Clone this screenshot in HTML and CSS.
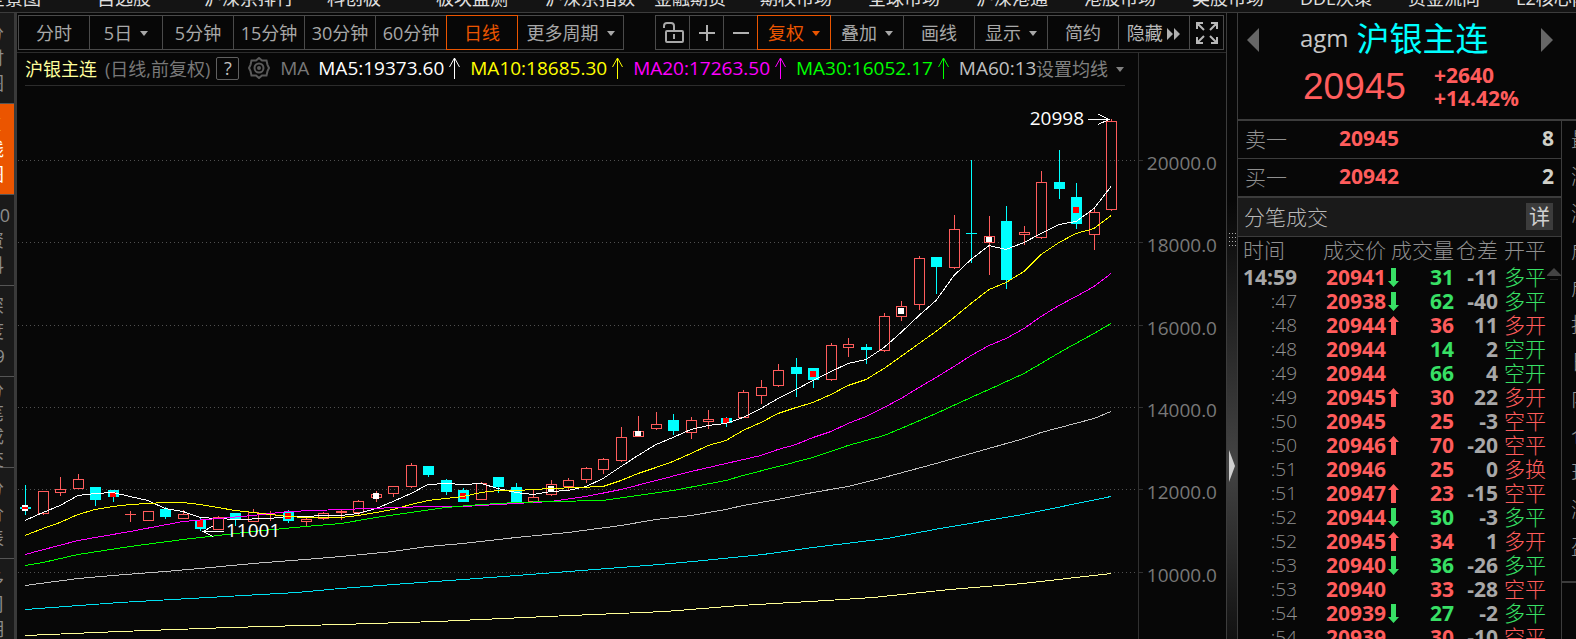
FILE: index.html
```html
<!DOCTYPE html>
<html lang="zh-CN">
<head>
    <meta charset="UTF-8">
    <meta name="viewport" content="width=device-width, initial-scale=1.0">
    <title>沪银主连 agm</title>
    <link rel="stylesheet" href="styles.css">
</head>
<body>
    <nav class="menu">
        <a href="#">全景图</a>
        <a href="#">自选股</a>
        <a href="#">沪深京排行</a>
        <a href="#">科创板</a>
        <a href="#">板块监测</a>
        <a href="#">沪深京指数</a>
        <a href="#">金融期货</a>
        <a href="#">期权市场</a>
        <a href="#">全球市场</a>
        <a href="#">沪深港通</a>
        <a href="#">港股市场</a>
        <a href="#">美股市场</a>
        <a href="#">DDE决策</a>
        <a href="#">资金流向</a>
        <a href="#">L2核心内参</a>
    </nav>

    <div class="app">
        <nav class="side">
            <a href="#">分<br>时<br>图</a>
            <a href="#" class="active">K<br>线<br>图</a>
            <a href="#">F10<br>资<br>料</a>
            <a href="#">深<br>度<br>F9</a>
            <a href="#" class="four">分<br>笔<br>成<br>交</a>
            <a href="#">分<br>价<br>表</a>
            <a href="#">多<br>周<br>期</a>
        </nav>

        <main class="main">
            <div class="toolbar">
                <div class="group periods">
                    <button>分时</button>
                    <button class="wide">5日<i class="caret"></i></button>
                    <button>5分钟</button>
                    <button>15分钟</button>
                    <button>30分钟</button>
                    <button>60分钟</button>
                    <button class="on">日线</button>
                    <button class="more">更多周期<i class="caret"></i></button>
                </div>
                <div class="group tools">
                    <button class="icon" aria-label="锁定">
                        <svg width="24" height="24" viewBox="0 0 24 24" fill="none" stroke="#a8a8a8" stroke-width="2">
                            <rect x="5" y="10" width="17" height="11" rx="1"/>
                            <path d="M3 7V5q0-3 3-3h4q3 0 3 3v5M13 13v5"/>
                        </svg>
                    </button>
                    <button class="icon" aria-label="放大">
                        <svg width="18" height="18" viewBox="0 0 18 18" stroke="#b0b0b0" stroke-width="2"><path d="M1 9h16M9 1v16"/></svg>
                    </button>
                    <button class="icon" aria-label="缩小">
                        <svg width="18" height="18" viewBox="0 0 18 18" stroke="#b0b0b0" stroke-width="2"><path d="M1 9h16"/></svg>
                    </button>
                    <button class="wide on">复权<i class="caret"></i></button>
                    <button class="wide">叠加<i class="caret"></i></button>
                    <button>画线</button>
                    <button class="wide">显示<i class="caret"></i></button>
                    <button>简约</button>
                    <button class="hide">隐藏
                        <svg width="14" height="12" viewBox="0 0 14 12" fill="#b0b0b0"><path d="M0 0l6 6-6 6zM7 0l6 6-6 6z"/></svg>
                    </button>
                    <button class="icon" aria-label="全屏">
                        <svg width="22" height="22" viewBox="0 0 22 22" fill="none" stroke="#b8b8b8" stroke-width="2">
                            <path d="M1 7V1h6M2 2l6 6M15 1h6v6M20 2l-6 6M1 15v6h6M2 20l6-6M21 15v6h-6M20 20l-6-6"/>
                        </svg>
                    </button>
                </div>
            </div>

            <div class="ma-row">
                <span class="name">沪银主连</span>
                <span class="mode">(日线,前复权)</span>
                <button class="help">?</button>
                <svg class="gear" width="22" height="22" viewBox="0 0 22 22" fill="none" stroke="#5a5a5a" stroke-width="2">
                    <path d="M11 1l3 2.600 4.500 0 1 4.200 1.500 3.200-1.500 3.200-1 4.200-4.500 0-3 2.600-3-2.600-4.500 0-1-4.200L1 11l1.500-3.200 1-4.200 4.500 0z"/>
                    <circle cx="11" cy="11" r="4.500"/>
                    <circle cx="11" cy="11" r="1"/>
                </svg>
                <span class="label">MA</span>
                <div class="values">
                    <span class="ma5">MA5:19373.60<svg class="up" viewBox="0 0 11 22"><path d="M5.500 22V1M.5 10l5-9 5 9"/></svg></span>
                    <span class="ma10">MA10:18685.30<svg class="up" viewBox="0 0 11 22"><path d="M5.500 22V1M.5 10l5-9 5 9"/></svg></span>
                    <span class="ma20">MA20:17263.50<svg class="up" viewBox="0 0 11 22"><path d="M5.500 22V1M.5 10l5-9 5 9"/></svg></span>
                    <span class="ma30">MA30:16052.17<svg class="up" viewBox="0 0 11 22"><path d="M5.500 22V1M.5 10l5-9 5 9"/></svg></span>
                    <span class="ma60">MA60:13905.42</span>
                </div>
                <button class="set">设置均线<i class="caret"></i></button>
            </div>

            <svg id="chart" class="chart" viewBox="17 52 1209 587"></svg>
        </main>

        <div class="splitter">
            <svg class="grip" width="8" height="13" viewBox="0 0 8 13" stroke="#b0b0b0" stroke-dasharray="1 2"><path d="M1 .5h7M1 4.500h7M1 8.500h7M1 12.500h7"/></svg>
            <svg class="handle" width="7" height="32" viewBox="0 0 7 32" fill="#d0d0d0"><path d="M0 0l6 16-6 16z"/></svg>
        </div>

        <aside class="quote">
            <header class="head">
                <div class="title">
                    <button class="step" aria-label="上一个"><svg width="12" height="24" viewBox="0 0 12 24" fill="#666"><path d="M12 0v24L0 12z"/></svg></button>
                    <h1><span>agm</span>沪银主连</h1>
                    <button class="step" aria-label="下一个"><svg width="12" height="24" viewBox="0 0 12 24" fill="#666"><path d="M0 0v24l12-12z"/></svg></button>
                </div>
                <div class="last">
                    <strong class="price">20945</strong>
                    <div class="change">+2640<br>+14.42%</div>
                </div>
            </header>
            <div class="cols">
                <section class="left">
                    <dl class="book">
                        <div><dt>卖一</dt><dd class="red">20945</dd><dd class="qty">8</dd></div>
                        <div><dt>买一</dt><dd class="red">20942</dd><dd class="qty">2</dd></div>
                    </dl>
                    <div class="bar"><h2>分笔成交</h2><button>详</button></div>
                    <table class="ticks">
                        <colgroup><col class="c-time"><col class="c-price"><col class="c-vol"><col class="c-diff"><col class="c-type"></colgroup>
                        <thead>
                            <tr><th>时间</th><th>成交价</th><th>成交量</th><th>仓差</th><th>开平</th></tr>
                        </thead>
                        <tbody id="ticks"></tbody>
                    </table>
                    <svg class="scroll-up" width="14" height="12" viewBox="0 0 14 12"><path d="M7 0l7 7v1H0V7z" fill="#444"/><path d="M3 11.500h8" stroke="#222"/></svg>
                </section>
                <ul class="more-info">
                    <li>最新</li><li>涨跌</li><li>涨幅</li><li>成量</li><li>成额</li><li>持仓</li>
                    <li>日增</li><li>内盘</li><li>仓差</li><li>现量</li><li>涨停</li><li>盈亏</li>
                </ul>
            </div>
        </aside>
    </div>

    <script src="script.js"></script>
</body>
</html>
```
FILE: styles.css
```css
* {
    box-sizing: border-box;
}
body {
    margin: 0;
    height: 100vh;
    overflow: hidden;
    display: flex;
    flex-direction: column;
    background: #070707;
    color: #a8a8a8;
    font-family: "Open Sans", "Noto Sans CJK SC", sans-serif;
    font-size: 18px;
}
a {
    color: inherit;
    text-decoration: none;
}
button {
    padding: 0;
    border: none;
    background: none;
    color: inherit;
    font: inherit;
}
h1, h2, dl, dd, ul {
    margin: 0;
    padding: 0;
    font-weight: 400;
}
.caret {
    display: inline-block;
    border: 4px solid transparent;
    border-top: 5px solid currentColor;
    border-bottom: none;
    margin-left: 8px;
    vertical-align: 4px;
}

/* top menu */
.menu {
    display: grid;
    grid-template-columns: 110px 107px 123px 109px 109px 109px 106px repeat(7, 108px) 1fr;
    height: 13px;
    flex: none;
    overflow: hidden;
    background: #141414;
    border-bottom: 1px solid #3c3c3c;
    color: #e0e0e0;
    margin-left: -13px;
}
.menu a {
    margin-top: -14px;
    line-height: 24px;
    white-space: nowrap;
}

.app {
    flex: 1;
    min-height: 0;
    display: flex;
}

/* left tabs */
.side {
    width: 17px;
    flex: none;
    overflow: hidden;
    background: #1a1a1a;
    border-right: 3px solid #3a3a3a;
    color: #8c8c8c;
}
.side a {
    display: block;
    width: 38px;
    height: 91px;
    margin-left: -24px;
    padding-top: 8px;
    line-height: 25px;
    text-align: center;
    border-bottom: 1px solid #555;
}
.side .active {
    background: #eb5500;
    color: #fff;
}
.side .four {
    padding-top: 2px;
    line-height: 23px;
}

.main {
    flex: 1;
    min-width: 0;
    position: relative;
}

/* toolbar */
.toolbar {
    display: flex;
    justify-content: space-between;
    height: 40px;
    padding: 2px 2px 0 1px;
    border-bottom: 1px solid #2c2c2c;
}
.group {
    display: flex;
    height: 35px;
}
.group button {
    width: 72px;
    flex: none;
    border: 1px solid #4a4a4a;
    margin-right: -1px;
    padding-bottom: 2px;
    white-space: nowrap;
}
.group .wide {
    width: 74px;
}
.periods .more {
    width: 107px;
}
.tools {
    margin-right: 1px;
}
.tools .icon {
    width: 35px;
    padding: 0;
    display: flex;
    align-items: center;
    justify-content: center;
}
.group .on {
    position: relative;
    border-color: #eb5500;
    color: #eb5500;
}
.group .hide {
    color: #b8b8b8;
}

/* moving averages */
.ma-row {
    display: flex;
    align-items: center;
    height: 33px;
    margin: 0 101px 0 8px;
    padding-bottom: 2px;
    border-bottom: 1px solid #2c2c2c;
    white-space: nowrap;
}
.name {
    color: #ffff9c;
}
.mode {
    margin-left: 8px;
    color: #787878;
}
.help {
    width: 23px;
    height: 23px;
    margin-left: 6px;
    border: 1px solid #606060;
    border-radius: 2px;
    line-height: 20px;
    color: #c0c0c0;
}
.gear {
    margin-left: 9px;
}
.label {
    width: 38px;
    margin-left: 10px;
    font-size: 19px;
    color: #787878;
}
.values {
    flex: 1;
    min-width: 0;
    overflow: hidden;
    display: flex;
    gap: 10px;
    font-size: 19px;
}
.values span {
    display: flex;
    align-items: center;
}
.up {
    width: 11px;
    height: 22px;
    margin-left: 5px;
    fill: none;
    stroke: currentColor;
}
.ma5 { color: #fff; }
.ma10 { color: #ff0; }
.ma20 { color: #f0f; }
.ma30 { color: #0f0; }
.ma60 { color: #c0c0c0; }
.set {
    color: #808080;
    margin-right: 1px;
}

.chart {
    position: absolute;
    top: 39px;
    left: 0;
    width: 100%;
    pointer-events: none;
    shape-rendering: crispEdges;
    font-size: 19px;
}

/* splitter */
.splitter {
    position: relative;
    width: 12px;
    flex: none;
    border-left: 1px solid #3c3c3c;
    border-right: 1px solid #3c3c3c;
    background: linear-gradient(#070707 30%, #444 72%, #111);
}
.grip {
    position: absolute;
    top: 220px;
    left: 1px;
}
.handle {
    position: absolute;
    top: 437px;
    left: 2px;
}

/* quote panel */
.quote {
    width: 338px;
    flex: none;
    display: flex;
    flex-direction: column;
    overflow: hidden;
}
.head {
    height: 108px;
    flex: none;
    border-bottom: 2px solid #3c3c3c;
}
.title {
    display: flex;
    align-items: center;
    height: 54px;
    padding: 0 23px 0 9px;
}
.step {
    height: 24px;
    line-height: 0;
}
.title h1 {
    flex: 1;
    display: flex;
    align-items: center;
    gap: 8px;
    padding: 0 0 6px 41px;
    font-size: 33px;
    color: #0ff;
}
.title span {
    font-size: 24px;
    color: #c8c8c8;
}
.last {
    display: flex;
    align-items: center;
    height: 40px;
    padding-left: 65px;
    gap: 28px;
    color: #ff5c5c;
}
.price {
    font: 37px "Liberation Sans", sans-serif;
}
.change {
    font-size: 21px;
    font-weight: 700;
    line-height: 23px;
}
.cols {
    flex: 1;
    min-height: 0;
    display: flex;
}
.left {
    position: relative;
    width: 324px;
    flex: none;
    border-right: 1px solid #3c3c3c;
    font-size: 21px;
}
.book div {
    display: grid;
    grid-template-columns: 94px 1fr auto;
    align-items: center;
    height: 38px;
    padding: 0 7px 3px;
    border-bottom: 1px solid #3c3c3c;
}
.book dt {
    font-weight: 300;
    color: #909090;
}
.book dd {
    font-weight: 700;
}
.book .qty {
    color: #d0d0c8;
}
.bar {
    display: flex;
    align-items: center;
    justify-content: space-between;
    height: 40px;
    padding: 0 8px 2px 6px;
    background: #1a1a1a;
    border-top: 1px solid #3c3c3c;
    border-bottom: 1px solid #3c3c3c;
}
.bar h2 {
    font-size: 21px;
    font-weight: 300;
    color: #b8b8b8;
}
.bar button {
    width: 27px;
    height: 27px;
    line-height: 25px;
    background: #3c3c3c;
    color: #d0d0d0;
}
.ticks {
    width: 308px;
    table-layout: fixed;
    border-collapse: collapse;
}
.c-time { width: 59px; }
.c-price { width: 89px; }
.c-vol { width: 68px; }
.c-diff { width: 44px; }
.c-type { width: 48px; }
.ticks th, .ticks td {
    padding: 0;
    height: 24px;
    line-height: 22px;
    padding-bottom: 2px;
    text-align: right;
    white-space: nowrap;
}
.ticks th {
    height: 29px;
    line-height: 27px;
    font-weight: 300;
    color: #909090;
}
.ticks th:first-child {
    text-align: left;
    padding-left: 5px;
}
.ticks td:first-child {
    font-size: 19px;
    font-weight: 300;
    color: #909090;
}
.ticks tr:first-child td:first-child {
    font-size: 21px;
    font-weight: 700;
    color: #a8a8a8;
}
.ticks td:nth-child(n+2):nth-child(-n+4) {
    font-weight: 700;
}
.ticks td.type {
    font-weight: 300;
}
.ticks .arrow {
    width: 11px;
    height: 19px;
    margin-left: 2px;
    vertical-align: -2px;
    fill: currentColor;
}
.ticks td:nth-child(2) {
    padding-left: 29px;
    text-align: left;
}
.red { color: #ff5c5c; }
.green { color: #38e065; }
.scroll-up {
    position: absolute;
    top: 147px;
    right: 0;
}
.more-info {
    flex: 1;
    height: 462px;
    overflow: hidden;
    list-style: none;
    padding-left: 9px;
    font-size: 21px;
    font-weight: 300;
    color: #909090;
    border-bottom: 2px solid #3c3c3c;
}
.more-info li {
    height: 37px;
    line-height: 36px;
    white-space: nowrap;
}
```
FILE: script.js
```js
// x, body top, body bottom, high, low, up/down, marker [colour, top, bottom]
const candles = [
    [25, 507, 509, 485, 515, 'd', ['cross', 505, 511]],
    [43, 491, 514, 491, 515, 'u'],
    [60, 489, 493, 477, 496, 'u'],
    [78, 479, 489, 474, 489, 'u'],
    [95, 487, 500, 487, 506, 'd'],
    [113, 490, 497, 490, 502, 'd', ['red', 492, 497]],
    [130, 514, 515, 511, 522, 'u'],
    [148, 511, 521, 511, 521, 'u'],
    [165, 509, 517, 507, 519, 'd'],
    [183, 514, 519, 510, 519, 'u'],
    [200, 520, 529, 517, 531, 'd', ['red', 520, 527]],
    [218, 517, 530, 516, 530, 'u'],
    [235, 513, 519, 513, 526, 'd'],
    [253, 512, 522, 509, 522, 'u'],
    [270, 514, 515, 511, 521, 'u'],
    [288, 512, 521, 510, 523, 'd', ['red', 513, 519]],
    [306, 519, 522, 518, 526, 'u'],
    [323, 513, 519, 512, 520, 'u'],
    [341, 511, 513, 510, 520, 'u'],
    [358, 501, 513, 500, 515, 'u'],
    [376, 494, 498, 491, 502, 'u', ['white', 493, 499]],
    [393, 486, 494, 486, 497, 'u'],
    [411, 465, 487, 463, 488, 'u'],
    [428, 466, 475, 466, 477, 'd'],
    [446, 480, 492, 479, 495, 'd'],
    [463, 490, 502, 488, 502, 'd', ['red', 493, 499]],
    [481, 483, 500, 482, 500, 'u'],
    [498, 477, 487, 477, 493, 'd'],
    [516, 487, 502, 483, 502, 'd'],
    [533, 497, 502, 490, 502, 'u'],
    [551, 484, 495, 480, 496, 'u', ['white', 486, 492]],
    [568, 480, 487, 478, 490, 'u'],
    [586, 468, 480, 467, 483, 'u'],
    [603, 459, 470, 458, 474, 'u'],
    [621, 437, 461, 427, 462, 'u'],
    [638, 431, 437, 416, 437, 'u', ['white', 431, 436]],
    [656, 424, 429, 412, 430, 'u'],
    [673, 420, 431, 414, 435, 'd'],
    [691, 420, 433, 417, 439, 'u'],
    [708, 419, 422, 410, 429, 'u'],
    [726, 418, 423, 417, 427, 'd', ['red', 418, 423]],
    [743, 392, 418, 390, 418, 'u'],
    [761, 387, 396, 380, 404, 'u'],
    [778, 370, 386, 364, 387, 'u'],
    [796, 367, 374, 358, 397, 'd'],
    [813, 368, 380, 368, 388, 'd', ['red', 371, 377]],
    [831, 345, 380, 343, 381, 'u'],
    [848, 344, 348, 338, 357, 'u'],
    [866, 347, 350, 344, 364, 'd'],
    [884, 316, 351, 313, 352, 'u'],
    [901, 306, 317, 301, 321, 'u', ['white', 308, 314]],
    [919, 258, 305, 256, 310, 'u'],
    [936, 257, 267, 257, 294, 'd'],
    [954, 229, 268, 215, 269, 'u'],
    [971, 233, 234, 160, 263, 'd'],
    [989, 236, 243, 216, 275, 'u', ['white', 237, 242]],
    [1006, 221, 280, 206, 289, 'd'],
    [1024, 232, 235, 226, 245, 'u'],
    [1041, 182, 238, 171, 239, 'u'],
    [1059, 182, 189, 150, 199, 'd'],
    [1076, 197, 224, 183, 229, 'd', ['red', 207, 213]],
    [1094, 212, 235, 207, 250, 'u'],
    [1111, 121, 210, 119, 211, 'u']
];

const averages = {
    '#fff': '25,520 43,512 60,505 78,495 95,493 113,492 130,496 148,500 165,508 183,511 200,517 218,518 235,519 270,518 288,516 305,516 323,515 341,515 358,513 376,508 393,501 411,493 428,484 446,483 463,484 481,483 498,488 516,492 533,494 551,491 568,490 586,486 603,478 621,466 638,455 656,444 673,437 691,429 708,425 726,423 743,417 761,408 778,398 796,389 813,380 831,371 848,363 866,359 884,347 901,332 919,315 936,300 954,275 971,259 989,245 1006,249 1024,242 1041,233 1059,224 1076,221 1094,208 1111,186',
    '#ff0': '25,535 43,528 60,522 78,514 95,509 113,506 130,504 148,503 165,502 183,502 200,504 218,507 235,510 253,512 270,514 288,516 305,517 341,517 358,515 376,512 393,509 411,504 428,500 446,498 463,496 481,492 498,490 516,490 551,488 603,486 621,480 638,473 656,467 673,461 691,453 708,445 726,440 743,430 761,422 778,413 796,407 813,402 831,394 848,385 866,379 884,368 901,356 919,343 936,331 954,317 971,303 989,289 1006,282 1024,271 1041,254 1059,242 1076,233 1094,228 1111,215',
    '#f0f': '25,554 78,540 130,531 183,521 218,518 253,515 288,511 341,509 428,506 463,506 516,503 551,501 586,496 621,489 656,480 691,471 726,463 761,455 778,449 796,444 813,437 831,431 848,423 866,416 884,407 901,398 919,387 936,377 954,366 971,355 989,345 1006,338 1024,328 1041,316 1059,305 1076,296 1094,286 1111,273',
    '#0f0': '25,565 43,562 78,554 130,546 183,539 253,531 305,526 341,523 376,517 411,512 446,507 481,504 516,502 551,501 603,500 638,495 673,490 726,480 743,475 778,466 813,457 848,445 884,435 901,428 936,413 971,397 989,389 1024,373 1041,363 1063,350 1094,333 1111,323',
    '#c0c0c0': '25,585 78,578 113,575 165,571 200,568 253,563 305,559 341,556 393,551 428,546 463,543 516,537 568,532 621,525 656,519 691,515 726,509 743,505 778,499 813,492 848,486 884,477 936,463 971,453 1024,438 1041,432 1094,418 1111,411',
    '#00e0f0': '25,609 120,602 190,598 297,592 340,588 407,583 463,579 517,575 660,564 693,561 763,554 813,547 887,538 940,528 1023,514 1111,496',
    '#ffff96': '25,635 120,631 230,627 340,624 437,621 547,616 665,611 740,605 827,600 873,597 950,589 1023,583 1111,573'
};

const prices = [[20000, 160], [18000, 242], [16000, 325], [14000, 407], [12000, 489], [10000, 572]];

function drawChart() {
    let out = '<path d="M1138.5 52V639" stroke="#303030"/>';
    prices.forEach(([price, y]) => {
        out += `<path d="M18 ${y + 0.5}H1138" stroke="#505050" stroke-dasharray="1 3"/>
            <path d="M1138 ${y + 0.5}h5" stroke="#303030"/>
            <text x="1217" y="${y + 10}" text-anchor="end" fill="#787878">${price}.0</text>`;
    });
    candles.forEach(([x, top, bottom, high, low, dir, marker]) => {
        const color = dir === 'u' ? '#ff5c5c' : '#0ff';
        if (dir === 'u' && bottom - top > 2) {
            out += `<path d="M${x + 0.5} ${high}V${top}M${x + 0.5} ${bottom}V${low}" stroke="${color}"/>
                <rect x="${x - 4.5}" y="${top + 0.5}" width="10" height="${bottom - top - 1}" fill="none" stroke="${color}"/>`;
        } else {
            out += `<path d="M${x + 0.5} ${high}V${low}" stroke="${color}"/>
                <rect x="${x - 5}" y="${top}" width="11" height="${bottom - top}" fill="${color}"/>`;
        }
        if (marker && marker[0] === 'cross') {
            out += `<rect x="${x - 3}" y="${marker[1]}" width="6" height="6" fill="#fff"/>
                <path d="M${x - 3} ${marker[1] + 3}h6" stroke="red" stroke-width="2"/>`;
        } else if (marker) {
            out += `<rect x="${x - 3}" y="${marker[1]}" width="6" height="${marker[2] - marker[1]}" fill="${marker[0]}"/>`;
        }
    });
    Object.entries(averages).forEach(([color, points]) => {
        out += `<polyline transform="translate(0 0.5)" points="${points}" fill="none" stroke="${color}"/>`;
    });
    // highest and lowest price of the range
    out += `<g fill="none" stroke="#fff"><path d="M1088 119.500h21M1098 114l11 5.500-11 5"/><path d="M224 531.500h-21M213 526l-10 5.500 10 5"/></g>
        <text x="1084" y="125" text-anchor="end" fill="#fff">20998</text>
        <text x="226" y="537" fill="#fff">11001</text>`;
    document.getElementById('chart').innerHTML = out;
}

// time, price, arrow, volume, volume colour, position change, type
const ticks = [
    ['14:59', 20941, 'down', 31, 'green', -11, '多平'],
    [':47', 20938, 'down', 62, 'green', -40, '多平'],
    [':48', 20944, 'up', 36, 'red', 11, '多开'],
    [':48', 20944, '', 14, 'green', 2, '空开'],
    [':49', 20944, '', 66, 'green', 4, '空开'],
    [':49', 20945, 'up', 30, 'red', 22, '多开'],
    [':50', 20945, '', 25, 'red', -3, '空平'],
    [':50', 20946, 'up', 70, 'red', -20, '空平'],
    [':51', 20946, '', 25, 'red', 0, '多换'],
    [':51', 20947, 'up', 23, 'red', -15, '空平'],
    [':52', 20944, 'down', 30, 'green', -3, '多平'],
    [':52', 20945, 'up', 34, 'red', 1, '多开'],
    [':53', 20940, 'down', 36, 'green', -26, '多平'],
    [':53', 20940, '', 33, 'red', -28, '空平'],
    [':54', 20939, 'down', 27, 'green', -2, '多平'],
    [':54', 20939, '', 30, 'red', -10, '空平']
];

const arrows = {
    up: '<svg class="arrow red" viewBox="0 0 11 19"><path d="M5.500 0L11 6H8v13H3V6H0z"/></svg>',
    down: '<svg class="arrow green" viewBox="0 0 11 19"><path d="M5.500 19L11 13H8V0H3v13H0z"/></svg>'
};

function drawTicks() {
    document.getElementById('ticks').innerHTML = ticks.map(t => `
        <tr>
            <td>${t[0]}</td>
            <td class="red">${t[1]}${arrows[t[2]] || ''}</td>
            <td class="${t[4]}">${t[3]}</td>
            <td>${t[5]}</td>
            <td class="type ${t[4]}">${t[6]}</td>
        </tr>`).join('');
}

drawChart();
drawTicks();
```
